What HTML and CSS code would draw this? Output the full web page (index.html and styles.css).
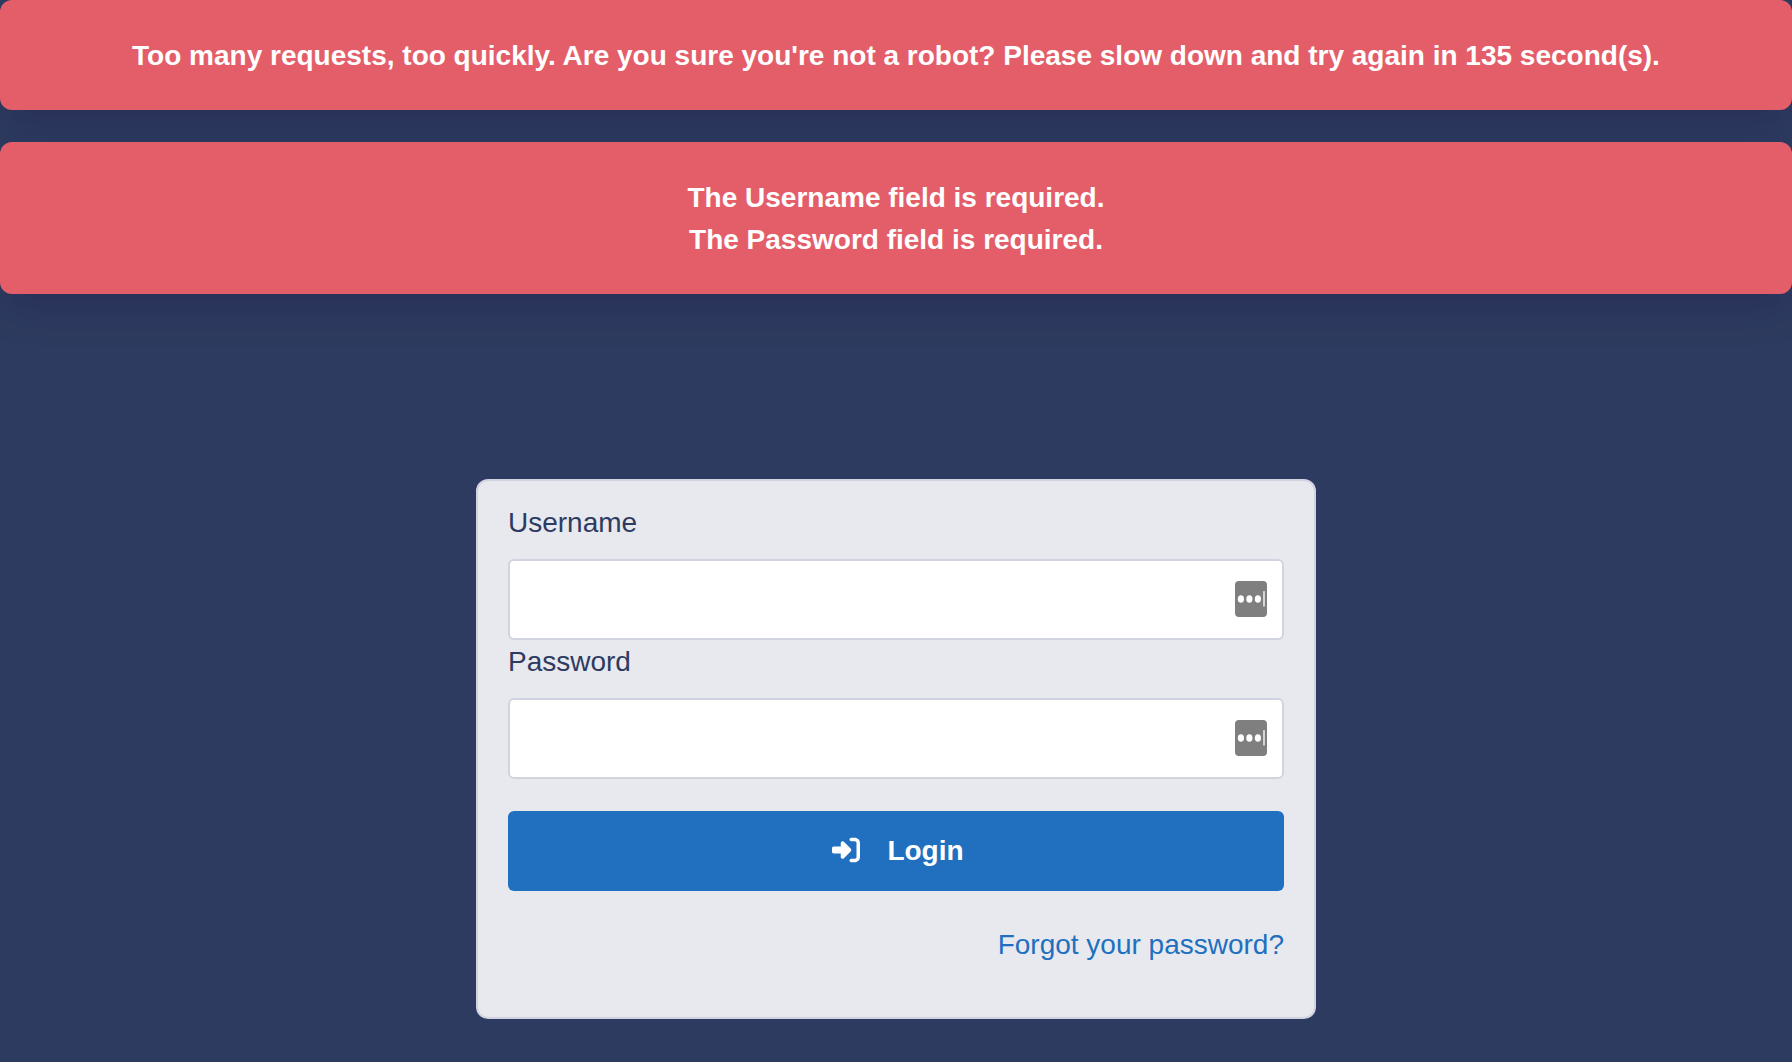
FILE: index.html
```html
<!DOCTYPE html>
<html lang="en">
<head>
<meta charset="utf-8">
<meta name="viewport" content="width=device-width, initial-scale=1">
<title>Login</title>
<link rel="stylesheet" href="styles.css">
</head>
<body>
<div class="alerts">
  <div class="alert" role="alert">Too many requests, too quickly. Are you sure you're not a robot? Please slow down and try again in 135 second(s).</div>
  <div class="alert" role="alert">The Username field is required.<br>The Password field is required.</div>
</div>
<main class="page">
  <form class="card">
    <label class="label" for="username">Username</label>
    <div class="field">
      <input class="input" id="username" name="username" type="text">
      <svg class="manager" viewBox="0 0 32 36" aria-hidden="true">
        <rect width="32" height="36" rx="4" fill="#7f7f7f"/>
        <g fill="#fff"><ellipse cx="5.9" cy="18" rx="3.1" ry="3.8"/><ellipse cx="14.4" cy="18" rx="3.1" ry="3.8"/><ellipse cx="22.9" cy="18" rx="3.1" ry="3.8"/><rect x="28.2" y="10" width="1.6" height="15.500" rx=".6" opacity=".85"/></g>
      </svg>
    </div>
    <label class="label" for="password">Password</label>
    <div class="field">
      <input class="input" id="password" name="password" type="password">
      <svg class="manager" viewBox="0 0 32 36" aria-hidden="true">
        <rect width="32" height="36" rx="4" fill="#7f7f7f"/>
        <g fill="#fff"><ellipse cx="5.9" cy="18" rx="3.1" ry="3.8"/><ellipse cx="14.4" cy="18" rx="3.1" ry="3.8"/><ellipse cx="22.9" cy="18" rx="3.1" ry="3.8"/><rect x="28.2" y="10" width="1.6" height="15.500" rx=".6" opacity=".85"/></g>
      </svg>
    </div>
    <button class="button" type="submit">
      <svg class="button-icon" viewBox="0 0 512 512" fill="currentColor" aria-hidden="true"><path d="M217.900 105.900L340.700 228.700c7.200 7.200 11.300 17.100 11.300 27.300s-4.100 20.100-11.300 27.300L217.900 406.100c-6.400 6.400-15 9.900-24 9.900c-18.700 0-33.900-15.200-33.900-33.900l0-62.100L32 320c-17.700 0-32-14.300-32-32l0-64c0-17.700 14.300-32 32-32l128 0 0-62.100c0-18.700 15.200-33.900 33.900-33.900c9 0 17.600 3.600 24 9.900zM352 416l64 0c17.700 0 32-14.300 32-32l0-256c0-17.700-14.300-32-32-32l-64 0c-17.700 0-32-14.300-32-32s14.300-32 32-32l64 0c53 0 96 43 96 96l0 256c0 53-43 96-96 96l-64 0c-17.700 0-32-14.300-32-32s14.300-32 32-32z"/></svg>
      Login
    </button>
    <p class="forgot"><a class="link" href="#">Forgot your password?</a></p>
  </form>
</main>
</body>
</html>
```
FILE: styles.css
```css
*,
*::before,
*::after {
  box-sizing: border-box;
}

body {
  margin: 0;
  min-height: 100vh;
  background: #2e3b60;
  color: #2e3b60;
  font: 28px/42px "Liberation Sans", Arial, sans-serif;
}

.alerts {
  display: flex;
  flex-direction: column;
  gap: 32px;
}

.alert {
  padding: 35px 32px 33px;
  border-radius: 12px;
  background: #e45e6a;
  box-shadow: 0 20px 40px -8px rgba(20, 10, 60, 0.22);
  color: #fff;
  font-weight: 700;
  text-align: center;
}

.page {
  padding: 185px 32px 40px;
}

.card {
  max-width: 840px;
  margin: 0 auto;
  padding: 20px 30px 51px;
  border: 2px solid #d1d3e0;
  border-radius: 12px;
  background: #e8e9ee;
}

.label {
  display: block;
  padding: 1px 0 15px;
}

.field {
  position: relative;
}

.input {
  display: block;
  width: 100%;
  height: 81px;
  padding: 16px 64px 16px 16px;
  border: 2px solid #d1d3e0;
  border-radius: 6px;
  background: #fff;
  color: inherit;
  font: inherit;
}

/* Password manager badge laid over the end of the input */
.manager {
  position: absolute;
  top: 22px;
  right: 17px;
  width: 32px;
  height: 36px;
}

.button {
  display: flex;
  align-items: center;
  justify-content: center;
  gap: 23px;
  width: 100%;
  height: 80px;
  margin: 32px 0 33px;
  padding: 0 32px;
  border: 0;
  border-radius: 6px;
  background: #2170c0;
  color: #fff;
  font: inherit;
  font-weight: 700;
  cursor: pointer;
}

.button-icon {
  width: 36px;
  height: 28px;
  margin-bottom: 2px;
}

.forgot {
  margin: 0;
  text-align: right;
}

.link {
  color: #2170c0;
  text-decoration: none;
}
```
